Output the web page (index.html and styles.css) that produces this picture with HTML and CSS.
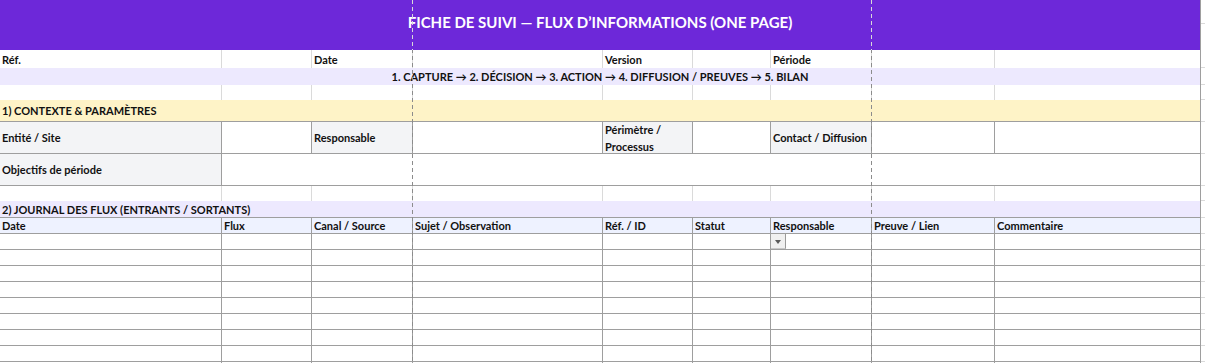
FILE: index.html
```html
<!DOCTYPE html>
<html lang="fr">
<head>
<meta charset="utf-8">
<title>Fiche de suivi</title>
<link rel="stylesheet" href="styles.css">
</head>
<body>
<div class="sheet">
  <div class="row h-title">
    <div class="c s9 title br">FICHE DE SUIVI — FLUX D’INFORMATIONS (ONE PAGE)</div>
    <div class="x x-title"><span></span></div>
  </div>

  <div class="row h18">
    <div class="c gr">Réf.</div>
    <div class="c gr"></div>
    <div class="c gr">Date</div>
    <div class="c gr"></div>
    <div class="c gr">Version</div>
    <div class="c gr"></div>
    <div class="c gr">Période</div>
    <div class="c gr"></div>
    <div class="c br"></div>
    <div class="x gb"></div>
  </div>

  <div class="row h17">
    <div class="c s9 lav center br">1. CAPTURE → 2. DÉCISION → 3. ACTION → 4. DIFFUSION / PREUVES → 5. BILAN</div>
    <div class="x gb"></div>
  </div>

  <div class="row h15">
    <div class="c gr"></div>
    <div class="c gr"></div>
    <div class="c gr"></div>
    <div class="c gr"></div>
    <div class="c gr"></div>
    <div class="c gr"></div>
    <div class="c gr"></div>
    <div class="c gr"></div>
    <div class="c br"></div>
    <div class="x gb"></div>
  </div>

  <div class="row h22">
    <div class="c s9 yel br bb">1) CONTEXTE &amp; PARAMÈTRES</div>
    <div class="x gb"></div>
  </div>

  <div class="row h32">
    <div class="c lbl br bb">Entité / Site</div>
    <div class="c br bb"></div>
    <div class="c lbl br bb">Responsable</div>
    <div class="c br bb"></div>
    <div class="c lbl br bb wrap">Périmètre / Processus</div>
    <div class="c br bb"></div>
    <div class="c lbl br bb">Contact / Diffusion</div>
    <div class="c br bb"></div>
    <div class="c br bb"></div>
    <div class="x gb"></div>
  </div>

  <div class="row h32">
    <div class="c lbl br bb">Objectifs de période</div>
    <div class="c s8 br bb"></div>
    <div class="x gb"></div>
  </div>

  <div class="row h15">
    <div class="c gr"></div>
    <div class="c gr"></div>
    <div class="c gr"></div>
    <div class="c gr"></div>
    <div class="c gr"></div>
    <div class="c gr"></div>
    <div class="c gr"></div>
    <div class="c gr"></div>
    <div class="c br"></div>
    <div class="x gb"></div>
  </div>

  <div class="row h17">
    <div class="c s9 lav br bb">2) JOURNAL DES FLUX (ENTRANTS / SORTANTS)</div>
    <div class="x gb"></div>
  </div>

  <div class="row h16 head">
    <div class="c br bb">Date</div>
    <div class="c br bb">Flux</div>
    <div class="c br bb">Canal / Source</div>
    <div class="c br bb">Sujet / Observation</div>
    <div class="c br bb">Réf. / ID</div>
    <div class="c br bb">Statut</div>
    <div class="c br bb">Responsable</div>
    <div class="c br bb">Preuve / Lien</div>
    <div class="c br bb">Commentaire</div>
    <div class="x gb"></div>
  </div>

  <div class="row h16 data">
    <div class="c br bb"></div><div class="c br bb"></div><div class="c br bb"></div><div class="c br bb"></div><div class="c br bb"></div><div class="c br bb"></div>
    <div class="c br bb rel"><span class="dd"><span class="tri"></span></span></div>
    <div class="c br bb"></div><div class="c br bb"></div><div class="x gb"></div>
  </div>
  <div class="row h16 data">
    <div class="c br bb"></div><div class="c br bb"></div><div class="c br bb"></div><div class="c br bb"></div><div class="c br bb"></div><div class="c br bb"></div><div class="c br bb"></div><div class="c br bb"></div><div class="c br bb"></div><div class="x gb"></div>
  </div>
  <div class="row h16 data">
    <div class="c br bb"></div><div class="c br bb"></div><div class="c br bb"></div><div class="c br bb"></div><div class="c br bb"></div><div class="c br bb"></div><div class="c br bb"></div><div class="c br bb"></div><div class="c br bb"></div><div class="x gb"></div>
  </div>
  <div class="row h16 data">
    <div class="c br bb"></div><div class="c br bb"></div><div class="c br bb"></div><div class="c br bb"></div><div class="c br bb"></div><div class="c br bb"></div><div class="c br bb"></div><div class="c br bb"></div><div class="c br bb"></div><div class="x gb"></div>
  </div>
  <div class="row h16 data">
    <div class="c br bb"></div><div class="c br bb"></div><div class="c br bb"></div><div class="c br bb"></div><div class="c br bb"></div><div class="c br bb"></div><div class="c br bb"></div><div class="c br bb"></div><div class="c br bb"></div><div class="x gb"></div>
  </div>
  <div class="row h16 data">
    <div class="c br bb"></div><div class="c br bb"></div><div class="c br bb"></div><div class="c br bb"></div><div class="c br bb"></div><div class="c br bb"></div><div class="c br bb"></div><div class="c br bb"></div><div class="c br bb"></div><div class="x gb"></div>
  </div>
  <div class="row h16 data">
    <div class="c br bb"></div><div class="c br bb"></div><div class="c br bb"></div><div class="c br bb"></div><div class="c br bb"></div><div class="c br bb"></div><div class="c br bb"></div><div class="c br bb"></div><div class="c br bb"></div><div class="x gb"></div>
  </div>
  <div class="row h16 data">
    <div class="c br bb"></div><div class="c br bb"></div><div class="c br bb"></div><div class="c br bb"></div><div class="c br bb"></div><div class="c br bb"></div><div class="c br bb"></div><div class="c br bb"></div><div class="c br bb"></div><div class="x gb"></div>
  </div>
  <div class="row h16 data">
    <div class="c br bb"></div><div class="c br bb"></div><div class="c br bb"></div><div class="c br bb"></div><div class="c br bb"></div><div class="c br bb"></div><div class="c br bb"></div><div class="c br bb"></div><div class="c br bb"></div><div class="x gb"></div>
  </div>

  <div class="pb pb1"></div>
  <div class="pb pb2"></div>
</div>
</body>
</html>
```

FILE: styles.css
```css
:root {
  --cols: 222px 90px 101px 190px 90px 78px 101px 123px 206px 4px;
  --grid: #dadada;
  --bd: #9e9e9e;
  --purple: #6d28d9;
  --lav: #ede9fe;
  --yel: #fef3c7;
  --head: #eef2ff;
  --lbl: #f3f4f6;
}

html, body {
  margin: 0;
  padding: 0;
  background: #fff;
}

body {
  width: 1205px;
  height: 363px;
  overflow: hidden;
  font-family: Lato, "Liberation Sans", "DejaVu Sans", sans-serif;
  font-size: 11px;
  font-weight: 700;
  color: #111;
}

.sheet {
  position: relative;
  width: 1205px;
}

.row {
  display: grid;
  grid-template-columns: var(--cols);
}

.h-title { height: 50px; }
.h18 { height: 18px; }
.h17 { height: 17px; }
.h15 { height: 15px; }
.h22 { height: 22px; }
.h32 { height: 32px; }
.h16 { height: 16px; }

.c {
  box-sizing: border-box;
  display: flex;
  align-items: center;
  padding-left: 2px;
  white-space: nowrap;
  overflow: hidden;
  min-width: 0;
  line-height: 1;
}

.s9 { grid-column: span 9; }
.s8 { grid-column: span 8; }

.gr { border-right: 1px solid var(--grid); }
.br { border-right: 1px solid var(--bd); }
.bb { border-bottom: 1px solid var(--bd); }
.gb { border-bottom: 1px solid var(--grid); }

.x { box-sizing: border-box; }

.x-title {
  display: flex;
  flex-direction: column;
}
.x-title span {
  display: block;
  height: 23px;
  border-bottom: 1px solid var(--grid);
}

.title {
  background: var(--purple);
  color: #fff;
  font-size: 15px;
  justify-content: center;
  padding: 0 0 6px 0;
}

.lav { background: var(--lav); }
.yel { background: var(--yel); }
.lbl { background: var(--lbl); }
.center { justify-content: center; padding-left: 0; }

.wrap {
  white-space: normal;
  line-height: 17px;
  padding-right: 4px;
}

.head .c { background: var(--head); }

.rel { position: relative; overflow: visible; }

.dd {
  position: absolute;
  left: 0;
  top: 0;
  width: 15px;
  height: 15px;
  box-sizing: border-box;
  background: #f0f0f0;
  border-right: 1px solid #9a9a9a;
  border-bottom: 1px solid #c8c8c8;
  display: flex;
  align-items: center;
  justify-content: center;
}

.tri {
  width: 0;
  height: 0;
  border-left: 3.5px solid transparent;
  border-right: 3.5px solid transparent;
  border-top: 4px solid #595959;
  margin-top: 1px;
}

.pb {
  position: absolute;
  top: 0;
  height: 363px;
  width: 1px;
  background: repeating-linear-gradient(to bottom, #8c8c8c 0 4px, transparent 4px 7px);
}
.pb::before {
  content: "";
  position: absolute;
  left: 0;
  top: 0;
  width: 1px;
  height: 50px;
  background: repeating-linear-gradient(to bottom, #d8d8d8 0 4px, transparent 4px 7px);
}
.pb1 { left: 412px; }
.pb2 { left: 871px; }
```
